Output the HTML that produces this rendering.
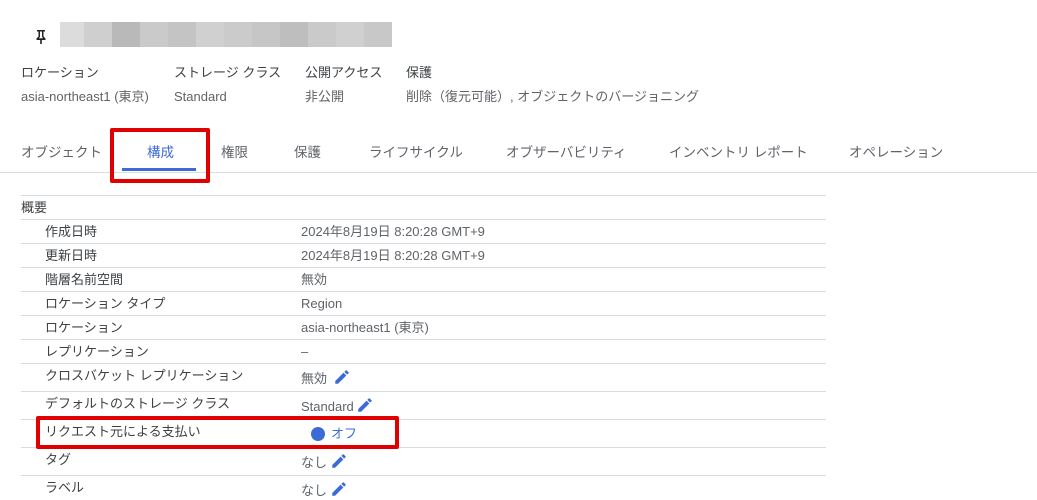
<!DOCTYPE html><html><head><meta charset="utf-8"><style>
*{margin:0;padding:0;box-sizing:border-box}
body{width:1037px;height:498px;background:#fff;position:relative;overflow:hidden;font-family:"Liberation Sans","Noto Sans CJK JP",sans-serif;font-size:13px;line-height:18px;color:#3c4043}
.a{position:absolute;white-space:nowrap}
.g{color:#5f6368}
.t{color:#5f6368;font-size:13.5px}
.hl{position:absolute;left:21px;width:805px;height:1px;background:#dadce0}
.blk{position:absolute;top:22px;height:25px}
.pen{position:absolute;width:18px;height:18px}
</style></head><body>
<svg class="a" style="left:34px;top:28px" width="14" height="16" viewBox="0 0 14 16"><path d="M3 2h8v1.5H9.5v5l2 2V12H7.8v4H6.2v-4H2.5v-1.5l2-2v-5H3z" fill="#202124"/><path d="M6 3.5v5.5l-1.3 1.3h4.6L8 9V3.5z" fill="#fff"/></svg>
<div class="blk" style="left:60px;width:24px;background:#dcdcdc"></div>
<div class="blk" style="left:84px;width:28px;background:#cfcfcf"></div>
<div class="blk" style="left:112px;width:28px;background:#b9b9b9"></div>
<div class="blk" style="left:140px;width:28px;background:#cacaca"></div>
<div class="blk" style="left:168px;width:28px;background:#c4c4c4"></div>
<div class="blk" style="left:196px;width:28px;background:#d0d0d0"></div>
<div class="blk" style="left:224px;width:28px;background:#cbcbcb"></div>
<div class="blk" style="left:252px;width:28px;background:#c6c6c6"></div>
<div class="blk" style="left:280px;width:28px;background:#bebebe"></div>
<div class="blk" style="left:308px;width:28px;background:#cacaca"></div>
<div class="blk" style="left:336px;width:28px;background:#d0d0d0"></div>
<div class="blk" style="left:364px;width:28px;background:#c8c8c8"></div>
<div class="a" style="left:21px;top:64px">ロケーション</div>
<div class="a" style="left:174px;top:64px">ストレージ クラス</div>
<div class="a" style="left:305px;top:64px">公開アクセス</div>
<div class="a" style="left:406px;top:64px">保護</div>
<div class="a g" style="left:21px;top:88px">asia-northeast1 (東京)</div>
<div class="a g" style="left:174px;top:88px">Standard</div>
<div class="a g" style="left:305px;top:88px">非公開</div>
<div class="a g" style="left:406px;top:88px">削除（復元可能）, オブジェクトのバージョニング</div>
<div class="a t" style="left:21px;top:144px">オブジェクト</div>
<div class="a t" style="left:147px;top:144px;color:#3c6bd8">構成</div>
<div class="a t" style="left:221px;top:144px">権限</div>
<div class="a t" style="left:294px;top:144px">保護</div>
<div class="a t" style="left:369px;top:144px">ライフサイクル</div>
<div class="a t" style="left:506px;top:144px">オブザーバビリティ</div>
<div class="a t" style="left:669px;top:144px">インベントリ レポート</div>
<div class="a t" style="left:849px;top:144px">オペレーション</div>
<div class="a" style="left:0;top:172px;width:1037px;height:1px;background:#dadce0"></div>
<div class="a" style="left:122px;top:168px;width:74px;height:3px;background:#3c6bd8"></div>
<div class="a" style="left:110px;top:128px;width:100px;height:55px;border:4px solid #e00000;border-radius:2px"></div>
<div class="hl" style="top:195px"></div>
<div class="a" style="left:21px;top:199px">概要</div>
<div class="hl" style="top:219px"></div><div class="hl" style="top:243px"></div><div class="hl" style="top:267px"></div><div class="hl" style="top:291px"></div><div class="hl" style="top:315px"></div><div class="hl" style="top:339px"></div><div class="hl" style="top:363px"></div><div class="hl" style="top:391px"></div><div class="hl" style="top:419px"></div><div class="hl" style="top:447px"></div><div class="hl" style="top:475px"></div>
<div class="a" style="left:45px;top:223px">作成日時</div><div class="a g" style="left:301px;top:223px">2024年8月19日 8:20:28 GMT+9</div>
<div class="a" style="left:45px;top:247px">更新日時</div><div class="a g" style="left:301px;top:247px">2024年8月19日 8:20:28 GMT+9</div>
<div class="a" style="left:45px;top:271px">階層名前空間</div><div class="a g" style="left:301px;top:271px">無効</div>
<div class="a" style="left:45px;top:295px">ロケーション タイプ</div><div class="a g" style="left:301px;top:295px">Region</div>
<div class="a" style="left:45px;top:319px">ロケーション</div><div class="a g" style="left:301px;top:319px">asia-northeast1 (東京)</div>
<div class="a" style="left:45px;top:343px">レプリケーション</div><div class="a g" style="left:301px;top:343px">–</div>
<div class="a" style="left:45px;top:367px">クロスバケット レプリケーション</div><div class="a g" style="left:301px;top:370px">無効</div>
<div class="a" style="left:45px;top:395px">デフォルトのストレージ クラス</div><div class="a g" style="left:301px;top:398px">Standard</div>
<div class="a" style="left:45px;top:423px">リクエスト元による支払い</div>
<div class="a" style="left:311px;top:427px;width:14px;height:14px;border-radius:50%;background:#3c6bd8"></div>
<div class="a" style="left:331px;top:425px;color:#3c6bd8">オフ</div>
<div class="a" style="left:45px;top:451px">タグ</div><div class="a g" style="left:301px;top:454px">なし</div>
<div class="a" style="left:45px;top:479px">ラベル</div><div class="a g" style="left:301px;top:482px">なし</div>
<svg class="pen" style="left:333px;top:368px" viewBox="0 0 24 24"><path d="M3 17.25V21h3.75L17.8 9.94l-3.75-3.75L3 17.25zM20.7 7.04a1 1 0 000-1.41l-2.34-2.34a1 1 0 00-1.41 0l-1.83 1.83 3.75 3.75 1.83-1.83z" fill="#3c6bd8"/></svg>
<svg class="pen" style="left:356px;top:396px" viewBox="0 0 24 24"><path d="M3 17.25V21h3.75L17.8 9.94l-3.75-3.75L3 17.25zM20.7 7.04a1 1 0 000-1.41l-2.34-2.34a1 1 0 00-1.41 0l-1.83 1.83 3.75 3.75 1.83-1.83z" fill="#3c6bd8"/></svg>
<svg class="pen" style="left:330px;top:452px" viewBox="0 0 24 24"><path d="M3 17.25V21h3.75L17.8 9.94l-3.75-3.75L3 17.25zM20.7 7.04a1 1 0 000-1.41l-2.34-2.34a1 1 0 00-1.41 0l-1.83 1.83 3.75 3.75 1.83-1.83z" fill="#3c6bd8"/></svg>
<svg class="pen" style="left:330px;top:480px" viewBox="0 0 24 24"><path d="M3 17.25V21h3.75L17.8 9.94l-3.75-3.75L3 17.25zM20.7 7.04a1 1 0 000-1.41l-2.34-2.34a1 1 0 00-1.41 0l-1.83 1.83 3.75 3.75 1.83-1.83z" fill="#3c6bd8"/></svg>
<div class="a" style="left:36px;top:416px;width:363px;height:33px;border:4px solid #e00000;border-radius:2px"></div>
</body></html>
